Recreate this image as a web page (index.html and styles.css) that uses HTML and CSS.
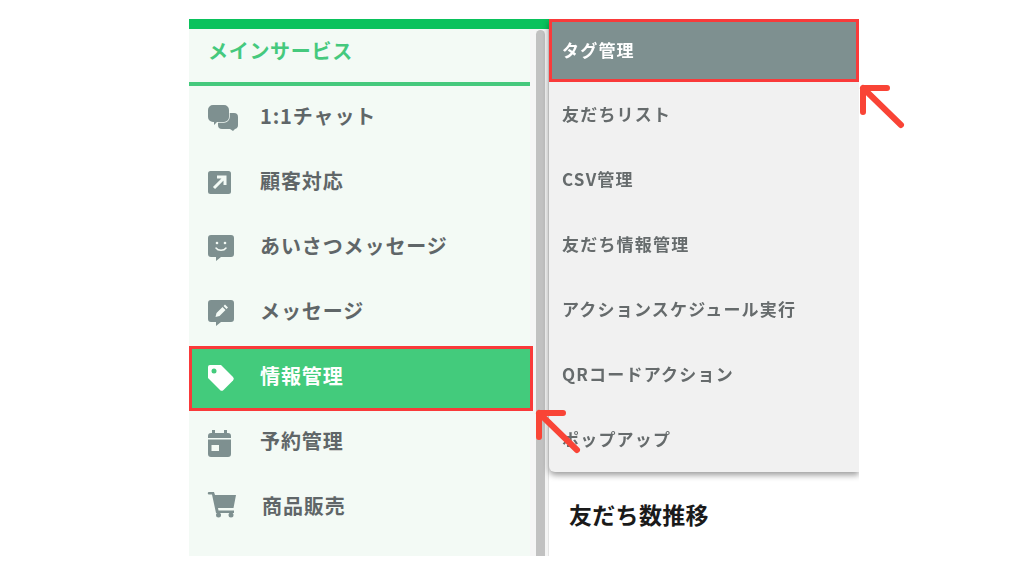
FILE: index.html
```html
<!DOCTYPE html>
<html lang="ja">
<head>
    <meta charset="UTF-8">
    <title>情報管理</title>
    <link rel="stylesheet" href="styles.css">
</head>
<body>
    <div class="app">
        <div class="side-col">
            <div class="top-bar"></div>
            <div class="side-row">
                <nav class="sidebar">
                    <h2 class="side-title">メインサービス</h2>
                    <a class="side-item">
                        <svg class="side-icon" viewBox="0 0 26 26"><path d="M14 8h12a4 4 0 0 1 4 4v8a4 4 0 0 1-3 4l-2 2-3-2h-8a4 4 0 0 1-4-4v-8a4 4 0 0 1 4-4z"/><path class="ring" d="M5 0h11a5 5 0 0 1 5 5v7a5 5 0 0 1-5 5H9l-3 3v-3H5a5 5 0 0 1-5-5V5a5 5 0 0 1 5-5z"/></svg>
                        <span>1:1チャット</span>
                    </a>
                    <a class="side-item">
                        <svg class="side-icon" viewBox="0 0 26 26"><rect x="0" y="1" width="23" height="23" rx="2.500"/><path d="M9 7h8v8M16.500 7.500L6 18" class="cut"/></svg>
                        <span>顧客対応</span>
                    </a>
                    <a class="side-item">
                        <svg class="side-icon" viewBox="0 0 26 26"><path d="M3 0h20a3 3 0 0 1 3 3v16a3 3 0 0 1-3 3H13l-5 4v-4H3a3 3 0 0 1-3-3V3a3 3 0 0 1 3-3z"/><circle class="dot" cx="9" cy="8" r="1.300"/><circle class="dot" cx="17" cy="8" r="1.300"/><path class="cut thin" d="M8 13c2 3 8 3 10 0"/></svg>
                        <span>あいさつメッセージ</span>
                    </a>
                    <a class="side-item">
                        <svg class="side-icon" viewBox="0 0 26 26"><path d="M3 0h20a3 3 0 0 1 3 3v16a3 3 0 0 1-3 3H13l-5 4v-4H3a3 3 0 0 1-3-3V3a3 3 0 0 1 3-3z"/><path class="dot" d="M14.500 7l3 3-6 6-4 1 1-4zM15.500 6l1.500-1.500 3 3-1.500 1.500z"/></svg>
                        <span>メッセージ</span>
                    </a>
                    <a class="side-item active">
                        <svg class="side-icon" viewBox="0 0 26 26"><path d="M2 0h11l12 12a2.500 2.500 0 0 1 0 3.500L15.500 25a2.500 2.500 0 0 1-3.500 0L0 13V2a2 2 0 0 1 2-2z"/><circle class="dot-green" cx="6" cy="6" r="2.500"/></svg>
                        <span>情報管理</span>
                    </a>
                    <a class="side-item">
                        <svg class="side-icon" viewBox="0 0 26 26"><path d="M4 0h3v3h9V0h3v3h1a3 3 0 0 1 3 3v2H0V6a3 3 0 0 1 3-3h1zM0 9.500h23V24a3 3 0 0 1-3 3H3a3 3 0 0 1-3-3z"/><rect class="dot" x="3.500" y="15" width="7.500" height="6"/></svg>
                        <span>予約管理</span>
                    </a>
                    <a class="side-item cart">
                        <svg class="side-icon" viewBox="0 0 26 26"><path d="M1 0h5l1 3h21l-2.500 13H10l.5 2.500H26v2.500H8L4 2.500H1a1.200 1.200 0 0 1 0-2.500z"/><circle cx="10.500" cy="23" r="2.500"/><circle cx="23" cy="23" r="2.500"/></svg>
                        <span class="shift">商品販売</span>
                    </a>
                </nav>
                <div class="scroll-track"><div class="scroll-thumb"></div></div>
            </div>
        </div>
        <main class="main">
            <h1 class="main-title">友だち数推移</h1>
            <ul class="submenu">
                <li class="sub-item current">タグ管理</li>
                <li class="sub-item">友だちリスト</li>
                <li class="sub-item">CSV管理</li>
                <li class="sub-item">友だち情報管理</li>
                <li class="sub-item">アクションスケジュール実行</li>
                <li class="sub-item">QRコードアクション</li>
                <li class="sub-item">ポップアップ</li>
            </ul>
        </main>
    </div>

    <!-- 注釈の矢印 -->
    <svg class="arrow arrow-sub" viewBox="0 0 50 50"><path d="M31 7H7v24M7 7l38 37"/></svg>
    <svg class="arrow arrow-side" viewBox="0 0 50 50"><path d="M31 7H7v24M7 7l38 37"/></svg>
</body>
</html>
```

FILE: styles.css
```css
* {
    box-sizing: border-box;
}
html, body {
    height: 100%;
}
body {
    margin: 0;
    padding: 19px 165px 20px 189px;
    background-color: #fff;
    font-family: "Noto Sans CJK JP", "Noto Sans", sans-serif;
    overflow: hidden;
    position: relative;
}
.app {
    display: flex;
    height: 537px;
    filter: blur(0.5px);
}
.side-col {
    width: 360px;
    display: flex;
    flex-direction: column;
}
.top-bar {
    height: 10px;
    background-color: #0ac25c;
}
.side-row {
    flex: 1;
    display: flex;
    min-height: 0;
}
.sidebar {
    width: 341px;
    background-color: #f3faf5;
}
.side-title {
    height: 57px;
    margin: 0;
    padding: 0 0 10px 19px;
    display: flex;
    align-items: center;
    border-bottom: 4px solid #45c97d;
    color: #45c97d;
    font-size: 20px;
    font-weight: 700;
    letter-spacing: 0.7px;
}
.side-item {
    height: 65px;
    display: flex;
    align-items: center;
    padding: 0 0 7px 19px;
    color: #5f6668;
    font-size: 20px;
    font-weight: 700;
    letter-spacing: 0.9px;
}
.side-icon {
    width: 26px;
    height: 26px;
    margin: 6px 26px 0 0;
    flex: none;
    fill: #7e9090;
    overflow: visible;
}
.side-item.cart .side-icon {
    margin-top: 0;
}
.side-icon .ring {
    stroke: #f3faf5;
    stroke-width: 1.5;
    paint-order: stroke;
}
.side-icon .cut {
    fill: none;
    stroke: #f3faf5;
    stroke-width: 3;
}
.side-icon .thin {
    stroke-width: 1.500;
    stroke-linecap: round;
}
.side-icon .dot {
    fill: #f3faf5;
}
.shift {
    margin-left: 2px;
}
.side-item.active {
    width: 344px;
    padding-left: 16px;
    position: relative;
    background-color: #43cb7c;
    border: 3px solid #f93a3a;
    color: #fff;
}
.side-item.active .side-icon {
    fill: #fff;
}
.side-icon .dot-green {
    fill: #43cb7c;
}
.scroll-track {
    width: 19px;
    padding: 1px 3px 0 6px;
    background-color: #f5f5f5;
    border-right: 1px solid #e4e4e4;
}
.scroll-thumb {
    height: 100%;
    background-color: #c1c1c1;
    border-radius: 5px 5px 0 0;
}
.main {
    flex: 1;
    position: relative;
    background-color: #fff;
}
.main-title {
    margin: 0;
    padding: 477px 0 0 20px;
    color: #1a1a1a;
    font-size: 23px;
    font-weight: 700;
    letter-spacing: 0.3px;
    line-height: 36px;
}
.submenu {
    position: absolute;
    top: 0;
    left: 0;
    width: 310px;
    margin: 0;
    padding: 0;
    list-style: none;
    background-color: #f1f1f1;
    border-radius: 0 0 0 6px;
    box-shadow: 0 3px 6px rgba(0, 0, 0, 0.4);
    clip-path: inset(0 0 -12px -12px);
}
.sub-item {
    height: 65px;
    display: flex;
    align-items: center;
    padding: 0 0 3px 13px;
    color: #666b6c;
    font-size: 17px;
    font-weight: 700;
    letter-spacing: 1.2px;
}
.sub-item.current {
    height: 63px;
    padding: 0 0 3px 10px;
    background-color: #7e9090;
    border: 3px solid #f93a3a;
    color: #fff;
}
.arrow {
    position: absolute;
    width: 50px;
    height: 50px;
    fill: none;
    stroke: #f94436;
    stroke-width: 6;
    stroke-linecap: round;
    stroke-linejoin: round;
}
.arrow-sub {
    left: 856px;
    top: 81px;
}
.arrow-side {
    left: 532px;
    top: 406px;
}
```
